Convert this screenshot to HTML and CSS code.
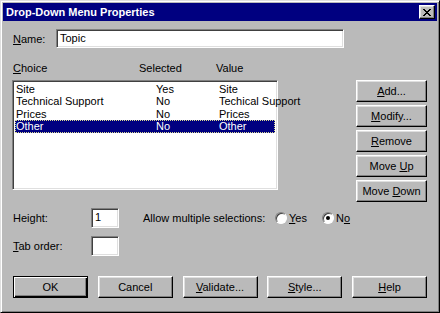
FILE: index.html
```html
<!DOCTYPE html>
<html lang="en">
<head>
  <meta charset="UTF-8">
  <title>Drop-Down Menu Properties</title>
  <link rel="stylesheet" href="styles.css">
</head>
<body>

<div class="dialog">
  <div class="titlebar">
    <span class="title">Drop-Down Menu Properties</span>
    <div class="close">
      <svg width="8" height="7" viewBox="0 0 8 7">
        <path d="M0 0h2v1h1v1h2v-1h1v-1h2v1h-1v1h-1v1h-1v1h1v1h1v1h1v1h-2v-1h-1v-1h-2v1h-1v1h-2v-1h1v-1h1v-1h1v-1h-1v-1h-1v-1h-1z" fill="#000"/>
      </svg>
    </div>
  </div>

  <div class="content">
    <div class="name-row">
      <label><u>N</u>ame:</label>
      <div class="field name-field">Topic</div>
    </div>

    <div class="middle">
      <div class="list-area">
        <div class="headers">
          <span class="h-choice"><u>C</u>hoice</span>
          <span class="h-selected">Selected</span>
          <span class="h-value">Value</span>
        </div>
        <div class="field listbox">
          <div class="row"><span>Site</span><span>Yes</span><span>Site</span></div>
          <div class="row"><span>Technical Support</span><span>No</span><span>Techical Support</span></div>
          <div class="row"><span>Prices</span><span>No</span><span>Prices</span></div>
          <div class="row selected"><span>Other</span><span>No</span><span>Other</span></div>
        </div>
      </div>
      <div class="side-buttons">
        <div class="btn"><span><u>A</u>dd...</span></div>
        <div class="btn"><span><u>M</u>odify...</span></div>
        <div class="btn"><span><u>R</u>emove</span></div>
        <div class="btn"><span>Move <u>U</u>p</span></div>
        <div class="btn"><span>Move <u>D</u>own</span></div>
      </div>
    </div>

    <div class="opt-row">
      <label class="opt-label">Hei<u>g</u>ht:</label>
      <div class="field small-field">1</div>
      <span class="allow">Allow multiple selections:</span>
      <span class="radio"></span><span class="radio-text"><u>Y</u>es</span>
      <span class="radio checked"></span><span class="radio-text">N<u>o</u></span>
    </div>
    <div class="opt-row tab-row">
      <label class="opt-label"><u>T</u>ab order:</label>
      <div class="field small-field"></div>
    </div>

    <div class="bottom-buttons">
      <div class="btn default"><span>OK</span></div>
      <div class="btn"><span>Cancel</span></div>
      <div class="btn"><span><u>V</u>alidate...</span></div>
      <div class="btn"><span><u>S</u>tyle...</span></div>
      <div class="btn"><span><u>H</u>elp</span></div>
    </div>
  </div>
</div>

</body>
</html>
```

FILE: styles.css
```css
* {
  box-sizing: border-box;
}
body {
  margin: 0;
  background: #bababa;
}
.dialog {
  width: 440px;
  height: 313px;
  background: #bababa;
  border: 1px solid;
  border-color: #dfdfdf #000 #000 #dfdfdf;
  box-shadow: inset 1px 1px #fff, inset -1px -1px #808080;
  padding: 2px;
  font-family: "Liberation Sans", Arial, sans-serif;
  font-size: 11px;
  color: #000;
}
u {
  text-decoration: underline;
  text-underline-offset: 1px;
}
.titlebar {
  height: 18px;
  background: #000080;
  color: #fff;
  display: flex;
  align-items: center;
  justify-content: space-between;
  padding: 0 2px 0 3px;
}
.title {
  font-weight: bold;
}
.close {
  width: 16px;
  height: 14px;
  background: #bababa;
  border: 1px solid;
  border-color: #fff #000 #000 #fff;
  box-shadow: inset -1px -1px #808080, inset 1px 1px #dfdfdf;
  display: flex;
  align-items: center;
  justify-content: center;
}
.content {
  padding: 8px 10px 0 10px;
}
.field {
  background: #fff;
  border: 1px solid;
  border-color: #808080 #fff #fff #808080;
  box-shadow: inset 1px 1px #404040, inset -1px -1px #dfdfdf;
  white-space: nowrap;
}
.name-row {
  display: flex;
  align-items: center;
  height: 19px;
}
.name-row label {
  width: 43px;
}
.name-field {
  width: 288px;
  height: 19px;
  padding: 2px 3px;
  line-height: 13px;
}
.middle {
  display: flex;
  justify-content: space-between;
  margin-top: 14px;
}
.headers {
  height: 18px;
  display: flex;
  align-items: flex-start;
}
.h-choice {
  width: 126px;
}
.h-selected {
  width: 77px;
}
.listbox {
  width: 266px;
  height: 110px;
  margin-left: -1px;
  padding: 2px 2px;
}
.row {
  display: grid;
  grid-template-columns: 140px 63px 1fr;
  height: 12.4px;
  line-height: 12px;
  padding-left: 1px;
}
.row span {
  white-space: nowrap;
}
.row.selected {
  background: #000080;
  color: #fff;
  outline: 1px dotted #d8d890;
  outline-offset: -1px;
}
.side-buttons {
  display: flex;
  flex-direction: column;
  gap: 3px;
  padding-top: 18px;
}
.btn {
  width: 71px;
  height: 22px;
  background: #bababa;
  border: 1px solid;
  border-color: #fff #000 #000 #fff;
  box-shadow: inset -1px -1px #808080, inset 1px 1px #dfdfdf;
  display: flex;
  align-items: center;
  justify-content: center;
  color: #000;
  white-space: nowrap;
}
.opt-row {
  display: flex;
  align-items: center;
  margin-top: 6px;
  height: 20px;
}
.tab-row {
  margin-top: 8px;
}
.opt-label {
  width: 78px;
}
.small-field {
  width: 28px;
  height: 20px;
  padding: 2px 3px;
  line-height: 13px;
}
.allow {
  margin-left: 24px;
  width: 132px;
}
.radio {
  width: 12px;
  height: 12px;
  border-radius: 50%;
  background: #fff;
  border: 1px solid;
  border-color: #808080 #fff #fff #808080;
  box-shadow: inset 1px 1px #404040;
  position: relative;
  margin-right: 2px;
}
.radio.checked::after {
  content: "";
  position: absolute;
  left: 3px;
  top: 3px;
  width: 4px;
  height: 4px;
  border-radius: 50%;
  background: #000;
}
.radio-text {
  margin-right: 15px;
}
.bottom-buttons {
  display: flex;
  justify-content: space-between;
  margin-top: 20px;
}
.bottom-buttons .btn {
  width: 75px;
}
.btn.default {
  border: 1px solid #000;
  box-shadow: inset 1px 1px #fff, inset -1px -1px #000, inset -2px -2px #808080;
}
```
